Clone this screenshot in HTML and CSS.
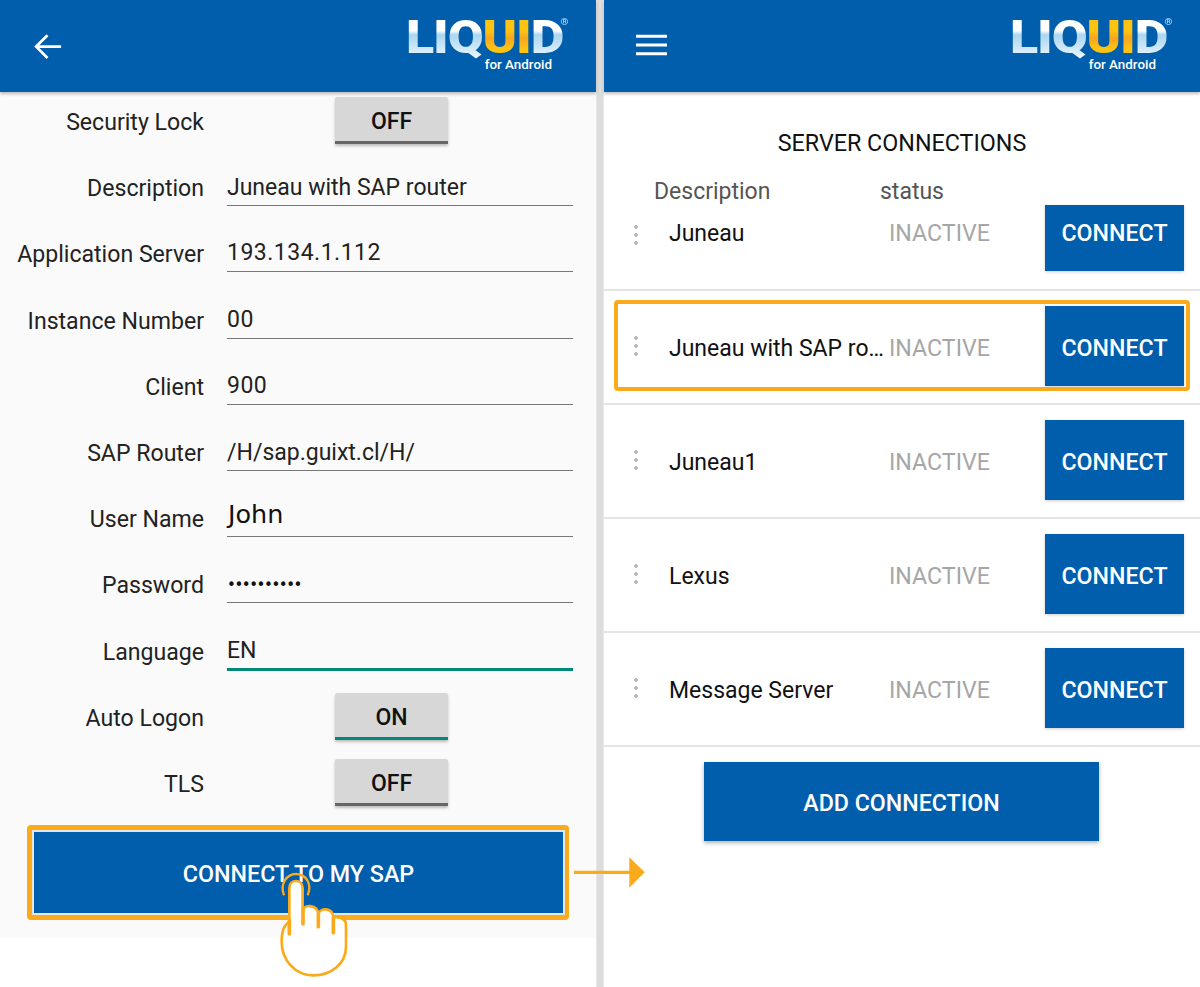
FILE: index.html
```html
<!DOCTYPE html>
<html lang="en">
<head>
<meta charset="utf-8">
<title>Liquid for Android</title>
<link rel="stylesheet" href="styles.css">
</head>
<body>
<div class="app">
  <section class="panel panel-left">
    <header class="appbar">
      <svg class="nav-icon" viewBox="0 0 32 32" aria-hidden="true"><path d="M31 15H4M16 2.500 3.500 15 16 27.500" fill="none" stroke="#fff" stroke-width="3"/></svg>
      <div class="logo"><div class="logo-word"><span class="liq">LIQ</span><span class="ui">UI</span><span class="liq">D</span><sup class="reg">®</sup></div><div class="logo-sub">for Android</div></div>
    </header>
    <main class="form">
      <div class="row"><span class="label">Security Lock</span><button class="toggle">OFF</button></div>
      <div class="row"><span class="label">Description</span><div class="field">Juneau with SAP router</div></div>
      <div class="row"><span class="label">Application Server</span><div class="field field-num">193.134.1.112</div></div>
      <div class="row"><span class="label">Instance Number</span><div class="field field-num">00</div></div>
      <div class="row"><span class="label">Client</span><div class="field field-num">900</div></div>
      <div class="row"><span class="label">SAP Router</span><div class="field">/H/sap.guixt.cl/H/</div></div>
      <div class="row"><span class="label">User Name</span><div class="field field-john">John</div></div>
      <div class="row"><span class="label">Password</span><div class="field field-pass">••••••••••</div></div>
      <div class="row"><span class="label">Language</span><div class="field field-active">EN</div></div>
      <div class="row"><span class="label">Auto Logon</span><button class="toggle toggle-on">ON</button></div>
      <div class="row"><span class="label">TLS</span><button class="toggle">OFF</button></div>
      <div class="cta-wrap"><button class="cta">CONNECT TO MY SAP</button></div>
    </main>
  </section>
  <div class="divider"></div>
  <section class="panel panel-right">
    <header class="appbar">
      <svg class="nav-icon nav-menu" viewBox="0 0 32 22" aria-hidden="true"><path d="M0 2h32M0 11h32M0 20h32" fill="none" stroke="#fff" stroke-width="3"/></svg>
      <div class="logo"><div class="logo-word"><span class="liq">LIQ</span><span class="ui">UI</span><span class="liq">D</span><sup class="reg">®</sup></div><div class="logo-sub">for Android</div></div>
    </header>
    <main class="servers">
      <h1 class="title">SERVER CONNECTIONS</h1>
      <div class="heads"><span>Description</span><span>status</span></div>
      <div class="srv srv-first"><i class="dots"></i><span class="name">Juneau</span><span class="state">INACTIVE</span><button class="connect">CONNECT</button></div>
      <div class="srv srv-marked"><i class="dots"></i><span class="name">Juneau with SAP router</span><span class="state">INACTIVE</span><button class="connect">CONNECT</button></div>
      <div class="srv"><i class="dots"></i><span class="name">Juneau1</span><span class="state">INACTIVE</span><button class="connect">CONNECT</button></div>
      <div class="srv"><i class="dots"></i><span class="name">Lexus</span><span class="state">INACTIVE</span><button class="connect">CONNECT</button></div>
      <div class="srv"><i class="dots"></i><span class="name">Message Server</span><span class="state">INACTIVE</span><button class="connect">CONNECT</button></div>
      <div class="add-wrap"><button class="add">ADD CONNECTION</button></div>
    </main>
  </section>
  <svg class="callout" viewBox="0 0 1380 561" aria-hidden="true">
    <path d="M1122 217H1290" fill="none" stroke="#fbaa1b" stroke-width="10"/>
    <path d="M1288 172 1334 217 1288 263Z" fill="#fbaa1b"/>
    <path d="M252 286C238 250 262 222 288 222C316 222 338 250 323 286" fill="none" stroke="#fbaa1b" stroke-width="7"/>
    <path d="M268 366V264C268 236 308 236 308 264V332C312 312 352 312 355 342C360 322 398 322 400 352C408 350 438 352 438 374V440C438 490 395 526 340 526C285 526 245 480 245 425C245 400 250 375 268 366Z" fill="#fff" stroke="#fbaa1b" stroke-width="8" stroke-linejoin="round"/>
    <path d="M268 402V360M309 372V330M355 380V342M400 398V354" fill="none" stroke="#fbaa1b" stroke-width="11" stroke-linecap="round"/>
  </svg>
</div>
</body>
</html>
```
FILE: styles.css
```css
*, *::before, *::after { box-sizing: border-box; }
html, body { margin: 0; padding: 0; background: #fff; }
body { font-family: Roboto, "Liberation Sans", sans-serif; color: #111; }
button { font-family: inherit; border: 0; padding: 0; }

.app { display: flex; position: relative; width: 1200px; height: 987px; overflow: hidden; }
.panel { width: 596px; flex: none; }
.divider { width: 8px; flex: none; background: #dcdcdc; border-left: 1px solid #e8e8e8; border-right: 1px solid #e8e8e8; }

.appbar {
  position: relative; z-index: 1;
  height: 92px; background: #005eac;
  box-shadow: 0 2px 3px rgba(0,0,0,.25);
  display: flex; align-items: center; justify-content: space-between;
  padding: 0 30px 0 33px;
}
.nav-icon { width: 29px; height: 29px; display: block; margin-top: 3px; }
.nav-menu { width: 31px; height: 22px; margin-left: -1px; margin-top: -3px; }

.logo { width: 160px; margin-top: -5px; position: relative; }
.logo-word {
  font-family: Roboto, sans-serif; font-weight: 900;
  font-size: 46.5px; line-height: 44px; letter-spacing: -1px; white-space: nowrap;
  transform: scaleX(1.12); transform-origin: 0 50%;
}
.liq, .ui { -webkit-background-clip: text; background-clip: text; color: transparent; }
.liq { background-image: linear-gradient(#fff 0, #fff 38%, #a9d6f1 46%, #eaf5fb 88%); }
.ui { background-image: linear-gradient(#ffc412 0, #ffc412 38%, #f6a61f 52%, #ffc412 72%); }
.reg { position: absolute; left: 138px; top: 3px; font-size: 9px; line-height: 9px; font-weight: 400; color: #cfe3f3; letter-spacing: 0; vertical-align: baseline; }
.logo-sub {
  font-family: Roboto, sans-serif; font-weight: 500; font-size: 13.4px; line-height: 14px;
  color: #fff; text-align: right; padding-right: 14px; margin-top: -1px;
}

.form { background: #fafafa; height: 846px; padding-top: 4px; }
.row { display: flex; align-items: flex-start; height: 66.2px; }
.label { width: 204px; flex: none; text-align: right; font-size: 23.1px; line-height: 53px; color: #222; }
.field {
  width: 346px; margin-left: 23px; height: 44px; padding-top: 13px;
  font-size: 23px; line-height: 25px; color: #222; border-bottom: 1px solid #777;
  white-space: nowrap;
}
.field-num { letter-spacing: .5px; padding-top: 12px; }
.field-john { font-family: "DejaVu Sans", sans-serif; font-size: 25.5px; padding: 8px 0 0 1px; line-height: 26px; color: #111; }
.field-pass { font-family: "DejaVu Sans", sans-serif; font-size: 15px; letter-spacing: -1.45px; padding-top: 14px; color: #111; }
.field-active { border-bottom: 3px solid #00897b; height: 45px; padding-top: 12px; }
.toggle {
  display: block; width: 113px; height: 47px; margin: 1px 0 0 131px; padding-top: 5px;
  background: #d7d7d7; border-bottom: 3px solid #666; border-radius: 2px 2px 0 0;
  font-size: 23px; font-weight: 500; color: #111;
  box-shadow: 0 2px 3px rgba(0,0,0,.25);
}
.toggle-on { border-bottom-color: #00897b; }
.cta-wrap {
  width: 542px; height: 95px; margin: 1px 0 0 27px; padding: 5px 4px 5px 5px;
  background: #fbaa1b; border-radius: 4px;
}
.cta {
  display: block; width: 100%; height: 100%; padding-top: 3px;
  background: #005eac; border: 2px solid #e6e6e6;
  color: #fff; font-size: 23.3px; font-weight: 500;
}

.servers { padding-top: 33px; }
.title { margin: 0; text-align: center; font-size: 23.3px; line-height: 36px; font-weight: 400; color: #111; }
.heads { display: flex; height: 44px; padding: 17px 0 0 50px; font-size: 23px; line-height: 28px; color: #555; }
.heads span:first-child { width: 226px; }
.srv {
  display: grid; grid-template-columns: 65px 220px 156px 139px; align-items: center;
  position: relative; height: 114px; padding: 15px 0 17px; border-bottom: 2px solid #e4e4e4;
  font-size: 23.2px;
}
.srv-first { height: 86px; padding: 0 0 18px; align-items: start; }
.srv-first .name, .srv-first .state { line-height: 53px; padding-top: 2px; }
.srv-first .dots { margin-top: 18px; }
.srv-first .connect { height: 66px; padding-bottom: 10px; padding-top: 0; }
.srv-marked::after {
  content: ""; position: absolute; left: 10px; top: 9px; width: 576px; height: 91px;
  border: 4px solid #fbaa1b; border-radius: 4px;
}
.dots { display: block; justify-self: start; margin-left: 30px; width: 4px; height: 24px;
  background: radial-gradient(circle, #bbb 1.9px, transparent 2.1px) 0 0 / 4px 8px repeat-y; }
.name { width: 219px; overflow: hidden; white-space: nowrap; text-overflow: ellipsis; color: #111; padding-top: 4px; font-size: 23px; }
.state { color: #a6a6a6; padding-top: 4px; }
.connect, .add {
  background: #005eac; color: #fff; font-size: 23.2px; font-weight: 500;
  box-shadow: 0 1px 3px rgba(0,0,0,.2);
}
.connect { height: 80px; width: 139px; padding-top: 3px; }
.add-wrap { padding: 15px 0 0 100px; }
.add { display: block; width: 395px; height: 79px; padding-top: 2px; box-shadow: 0 2px 4px rgba(0,0,0,.3); }

.callout { position: absolute; left: 200px; top: 800px; width: 460px; height: 187px; z-index: 2; }
```
